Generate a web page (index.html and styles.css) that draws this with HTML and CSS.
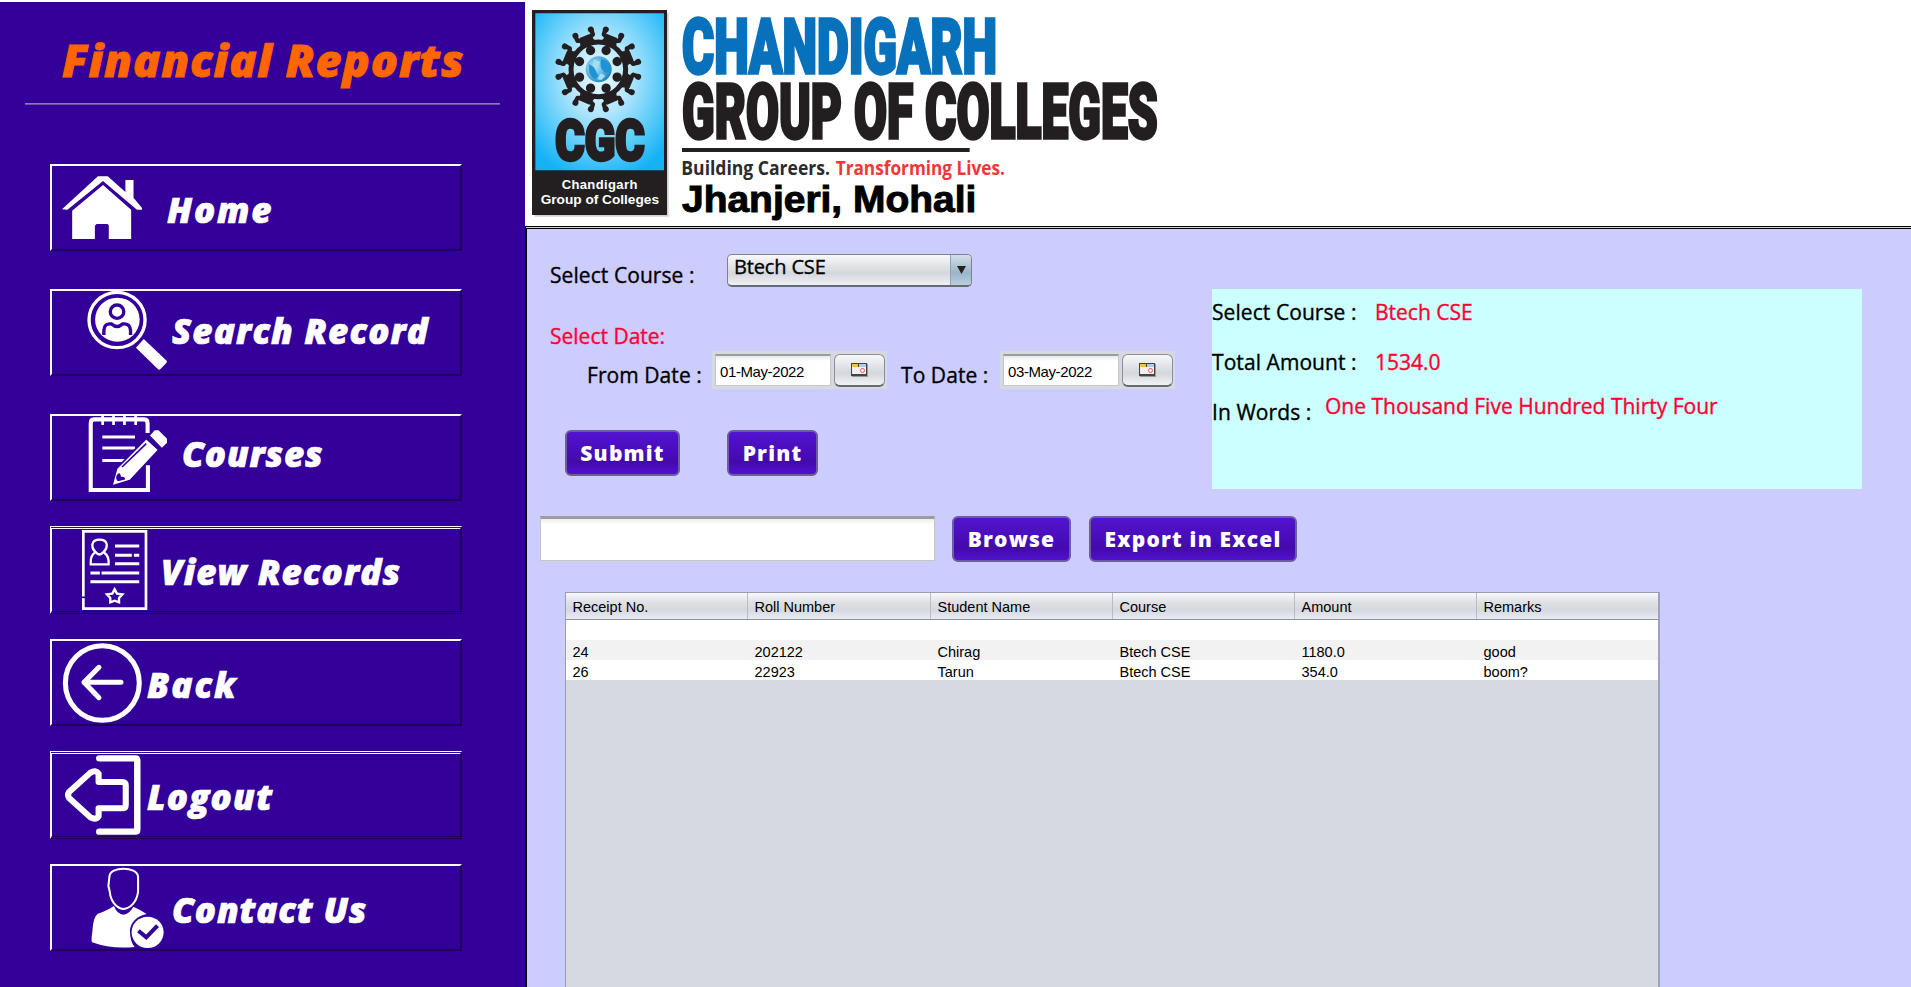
FILE: index.html
```html
<!DOCTYPE html>
<html lang="en">
<head>
<meta charset="utf-8">
<title>Financial Reports</title>
<link rel="stylesheet" href="styles.css">
</head>
<body>
<div class="app">
  <aside class="sidebar">
    <h1 class="title">Financial Reports</h1>
    <hr class="rule">
    <nav class="menu">
      <a class="item home">
        <svg width="80" height="63" viewBox="184 528 236 189" preserveAspectRatio="none" fill="#fff"><path d="M184 628L290 529H319L371 576V540H395V593L420 624V629H405L305 543L200 629Z"/><path d="M214 632L305 555L388 629V717H322V676L318 672H286L281 677V717H214Z"/></svg>
        <span class="label">Home</span>
      </a>
      <a class="item search">
        <svg width="80" height="79" viewBox="257 90 237 237" preserveAspectRatio="none"><circle cx="346" cy="177" r="83" fill="none" stroke="#fff" stroke-width="10"/><circle cx="347" cy="176" r="66" fill="#fff"/><circle cx="346" cy="152" r="20" fill="#fff" stroke="#309" stroke-width="10"/><path d="M307 226V208Q308 186 330 189Q346 204 362 189Q385 186 386 208V226Q346 250 307 226Z" fill="#fff"/><path d="M307 222V208Q308 186 330 189Q346 204 362 189Q385 186 386 208V222" fill="none" stroke="#309" stroke-width="10"/><path d="M425 234L493 299Q495 303 492 306L474 325Q470 328 466 323L402 260Z" fill="#fff"/></svg>
        <span class="label">Search Record</span>
      </a>
      <a class="item courses">
        <svg width="79" height="75" viewBox="259 466 232 222" preserveAspectRatio="none" fill="none" stroke="#fff"><path d="M434 516V488Q434 476 424 476H277Q267 476 267 488V685H435V612" stroke-width="12"/><path d="M302 466V493M334 466V493M366 466V493M399 466V493" stroke-width="8"/><path d="M301 528H397M301 561H397M301 598H375" stroke-width="9"/><path d="M430 532L467 566L384 656L329 673L343 621Z" fill="#fff" stroke="#309" stroke-width="5"/><path d="M359 617L430 548" stroke="#309" stroke-width="5"/><path d="M344 640Q353 628 356 646Q369 645 368 654L347 659Q338 652 344 640Z" fill="#309" stroke="none"/><path d="M455 508H466L491 533V545L476 560L441 524Z" fill="#fff" stroke="none"/></svg>
        <span class="label">Courses</span>
      </a>
      <a class="item view double">
        <svg width="66" height="80" viewBox="243 90 196 240" preserveAspectRatio="none" fill="none" stroke="#fff"><path d="M247 94H433V326H247Z" stroke-width="8"/><path d="M243 292H252" stroke="#309" stroke-width="5"/><path d="M284 157C268 142 270 119 295 119C321 119 322 142 306 157Q295 170 284 157ZM281 158Q267 168 269 193H322Q324 168 309 158" stroke-width="7"/><path d="M341 138H413M341 166H391M397 166H413M341 191H413M268 219H296M301 219H413M268 245H413" stroke-width="9"/><path d="M340 268L347 281L363 283L353 294V307L340 302L327 307V294L317 283L333 281Z" stroke-width="7"/></svg>
        <span class="label">View Records</span>
      </a>
      <a class="item back">
        <svg width="80" height="80" viewBox="184 429 236 240" preserveAspectRatio="none" fill="none" stroke="#fff"><ellipse cx="303" cy="549" rx="109" ry="112" stroke-width="15"/><path d="M293 502L249 547L293 593M249 547H358" stroke-width="15" stroke-linecap="round" stroke-linejoin="round"/></svg>
        <span class="label">Back</span>
      </a>
      <a class="item logout double">
        <svg width="75" height="80" viewBox="192 45 221 240" preserveAspectRatio="none" fill="none" stroke="#fff" stroke-linecap="round" stroke-linejoin="round"><path d="M293 55H399Q405 55 405 61V269Q405 275 399 275H293" stroke-width="19"/><path d="M291 126V101Q283 88 267 98L204 156Q198 165 204 174L267 232Q283 241 291 229V205H361Q371 205 371 194V137Q371 126 361 126Z" stroke-width="18"/></svg>
        <span class="label">Logout</span>
      </a>
      <a class="item contact">
        <svg width="73" height="80" viewBox="270 384 214 240" preserveAspectRatio="none"><path d="M324 410C325 378 405 378 408 410V455C405 485 385 505 365 507C343 504 327 482 325 455L321 438Z" fill="none" stroke="#fff" stroke-width="6"/><path d="M337 498Q347 523 365 524Q383 522 394 500Q417 510 433 522Q390 532 384 570Q384 605 398 621Q330 628 273 607Q270 600 274 575Q276 530 290 521Q320 511 337 498Z" fill="#fff"/><circle cx="436" cy="577" r="47" fill="#fff"/><path d="M409 572L432 592L465 557" fill="none" stroke="#309" stroke-width="12"/></svg>
        <span class="label">Contact Us</span>
      </a>
    </nav>
  </aside>

  <main class="main">
    <header class="banner">
      <svg class="logo" width="642" height="211" viewBox="36 30 1926 633">
        <defs>
          <radialGradient id="sky" cx=".5" cy=".4" r=".68"><stop offset="0" stop-color="#eefaff"/><stop offset=".35" stop-color="#b4e6fd"/><stop offset=".7" stop-color="#5cccf9"/><stop offset="1" stop-color="#15b2f6"/></radialGradient>
          <radialGradient id="globe" cx=".35" cy=".4" r=".7"><stop offset="0" stop-color="#b9e4f8"/><stop offset=".5" stop-color="#62b8e6"/><stop offset="1" stop-color="#167fc0"/></radialGradient>
          <g id="man"><circle cx="0" cy="-61" r="14"/><path d="M-14-82L-12-98L-25-103L-26-117M14-82L12-98L25-103L26-117" fill="none" stroke="#231f20" stroke-width="13" stroke-linejoin="round"/><path d="M-24-82L0-72L24-82L16-108H-16Z"/><circle cx="-25" cy="-119" r="9"/><circle cx="25" cy="-119" r="9"/></g>
        </defs>
        <path d="M44 38H446V650H44Z" fill="#d2d2d2"/>
        <path d="M36 30H441V645H36Z" fill="#231f20"/>
        <path d="M46 40H432V511H46Z" fill="url(#sky)"/>
        <g fill="#231f20" transform="translate(235 208)">
          <circle r="82" fill="none" stroke="#231f20" stroke-width="15"/>
          <use href="#man" transform="rotate(22.5)"/><use href="#man" transform="rotate(67.5)"/><use href="#man" transform="rotate(112.5)"/><use href="#man" transform="rotate(157.5)"/><use href="#man" transform="rotate(202.5)"/><use href="#man" transform="rotate(247.5)"/><use href="#man" transform="rotate(292.5)"/><use href="#man" transform="rotate(337.5)"/>
        </g>
        <circle cx="236" cy="208" r="39" fill="url(#globe)"/>
        <path d="M243 177Q265 180 272 205Q260 228 250 212Q238 205 243 177ZM208 192L222 202L235 228L225 238Q202 225 208 192Z" fill="#1e92d2"/>
        <path d="M222 178L240 186L232 205L219 198ZM242 220L256 227L244 240L232 238Z" fill="#a5dcf5"/>
        <g font-family="Roboto, sans-serif" font-weight="900" stroke-linejoin="miter">
          <text x="106" y="481" font-size="168" textLength="268" lengthAdjust="spacingAndGlyphs" fill="#231f20" stroke="#231f20" stroke-width="10">CGC</text>
          <text x="486" y="220" font-size="226" textLength="945" lengthAdjust="spacingAndGlyphs" fill="#0871bb" stroke="#0871bb" stroke-width="10">CHANDIGARH</text>
          <text x="486" y="415" font-size="226" textLength="1427" lengthAdjust="spacingAndGlyphs" fill="#231f20" stroke="#231f20" stroke-width="10">GROUP OF COLLEGES</text>
        </g>
        <g font-family="Liberation Sans, sans-serif" font-weight="700">
          <text x="125" y="567" font-size="39" textLength="227" fill="#fff">Chandigarh</text>
          <text x="62" y="612" font-size="39" textLength="355" lengthAdjust="spacingAndGlyphs" fill="#fff">Group of Colleges</text>
          <text x="486" y="635" font-size="112" textLength="883" lengthAdjust="spacingAndGlyphs" stroke="#000" stroke-width="3">Jhanjeri, Mohali</text>
        </g>
        <path d="M486 444H1349V456H486Z" fill="#231f20"/>
        <g font-family="Open Sans, sans-serif" font-weight="700" font-size="56">
          <text x="484" y="524" textLength="446" lengthAdjust="spacingAndGlyphs" fill="#2b2b2d">Building Careers.</text>
          <text x="947" y="524" textLength="508" lengthAdjust="spacingAndGlyphs" fill="#ee3737">Transforming Lives.</text>
        </g>
      </svg>
    </header>

    <section class="panel">
      <div class="top">
        <div class="filters">
          <div class="row course-row">
            <label class="text">Select Course :</label>
            <div class="combo"><span class="text">Btech CSE</span><span class="drop"><svg width="9" height="8" viewBox="0 0 9 8"><path d="M0 0H9L4.5 8Z" fill="#222"/></svg></span></div>
          </div>
          <div class="text red date-head">Select Date:</div>
          <div class="row date-row">
            <label class="text t-from">From Date :</label>
            <div class="chooser"><span class="date"><span>01-May-2022</span></span><span class="pick"><svg width="17" height="14" viewBox="0 0 17 14"><path d="M1 1H17V14H1Z" fill="#999"/><path d="M0 0H16V13H0Z" fill="#444"/><path d="M1 1H7V4H1Z" fill="#fb4"/><path d="M8 1H15V4H8Z" fill="#aaccf0"/><path d="M1 4H15V11H1Z" fill="#f4eeee"/><circle cx="11.500" cy="7.500" r="2" fill="#fff" stroke="#e55"/></svg></span></div>
            <label class="text t-to">To Date :</label>
            <div class="chooser"><span class="date"><span>03-May-2022</span></span><span class="pick"><svg width="17" height="14" viewBox="0 0 17 14"><path d="M1 1H17V14H1Z" fill="#999"/><path d="M0 0H16V13H0Z" fill="#444"/><path d="M1 1H7V4H1Z" fill="#fb4"/><path d="M8 1H15V4H8Z" fill="#aaccf0"/><path d="M1 4H15V11H1Z" fill="#f4eeee"/><circle cx="11.500" cy="7.500" r="2" fill="#fff" stroke="#e55"/></svg></span></div>
          </div>
          <div class="row action-row">
            <button class="btn submit">Submit</button>
            <button class="btn print">Print</button>
          </div>
        </div>
        <div class="summary">
          <div class="line"><span class="text">Select Course :</span><span class="text red">Btech CSE</span></div>
          <div class="line"><span class="text">Total Amount :</span><span class="text red">1534.0</span></div>
          <div class="line words"><span class="text">In Words :</span><span class="text red">One Thousand Five Hundred Thirty Four</span></div>
        </div>
      </div>
      <div class="export-row">
        <input class="path" type="text">
        <button class="btn browse">Browse</button>
        <button class="btn excel">Export in Excel</button>
      </div>
      <div class="grid">
        <div class="tr head"><span>Receipt No.</span><span>Roll Number</span><span>Student Name</span><span>Course</span><span>Amount</span><span>Remarks</span></div>
        <div class="tr"></div>
        <div class="tr alt"><span>24</span><span>202122</span><span>Chirag</span><span>Btech CSE</span><span>1180.0</span><span>good</span></div>
        <div class="tr"><span>26</span><span>22923</span><span>Tarun</span><span>Btech CSE</span><span>354.0</span><span>boom?</span></div>
      </div>
    </section>
  </main>
</div>
</body>
</html>
```
FILE: styles.css
```css
* { box-sizing: border-box; }
body { margin: 0; background: #fff; overflow: hidden; font-family: "Liberation Sans", Arial, sans-serif; }
svg { display: block; flex: none; overflow: visible; }
.app { display: flex; width: 1911px; height: 987px; }

.sidebar { width: 525px; height: 985px; margin-top: 2px; background: #309; flex: none; }
.title { margin: 0; padding: 35px 0 0 62px; height: 101px; font: italic 800 45px/46px "Open Sans", sans-serif; letter-spacing: .9px; color: #f60; white-space: nowrap; -webkit-text-stroke: .8px #f60; }
.rule { width: 475px; height: 2px; margin: 0 0 0 25px; border: 0; background: linear-gradient(#8a7abc 50%, #69569c 50%); }
.menu { padding: 59px 0 0 50px; }
.item { display: flex; align-items: flex-start; width: 412px; height: 87px; border: 2px solid; border-color: #fff #1e0059 #1e0059 #fff; color: #fff; }
.item.double { height: 88px; border-top: 3px double #fff; border-bottom: 3px double #1e0059; }
.label { font: italic 800 35px/36px "Open Sans", sans-serif; letter-spacing: 1.1px; white-space: nowrap; margin-top: 26px; -webkit-text-stroke: .7px #fff; }
.search, .courses { margin-top: 38px; }
.view, .back, .logout, .contact { margin-top: 25px; }
.home svg { margin: 10px 0 0 10px; }
.home .label { margin-left: 25px; letter-spacing: 1.9px; }
.search svg { margin: 0 0 0 35px; }
.search .label { margin: 22px 0 0 5px; }
.courses svg { margin: 0 0 0 36px; }
.courses .label { margin: 20px 0 0 15px; letter-spacing: .8px; }
.view svg { margin: 1px 0 0 30px; }
.view .label { margin: 25px 0 0 13px; }
.back svg { margin: 2px 0 0 10px; }
.back .label { margin-left: 5px; letter-spacing: 2px; }
.logout svg { margin: 1px 0 0 13px; }
.logout .label { margin: 25px 0 0 7px; letter-spacing: 1.3px; }
.contact svg { margin: 2px 0 0 39px; }
.contact .label { margin-left: 8px; letter-spacing: .8px; }

.main { flex: 1; display: flex; flex-direction: column; min-width: 0; }
.banner { height: 226px; padding: 10px 0 0 7px; flex: none; background: #fff; }
.panel { flex: 1; min-height: 0; border-top: 3px double #000; border-left: 2px solid #000; background: #ccf; }
.text { font: 500 21px/28px "Open Sans", sans-serif; color: #000; white-space: nowrap; -webkit-text-stroke: .35px currentColor; letter-spacing: .07px; }
.text.red { color: #f03; letter-spacing: 0; }
.top { display: flex; height: 287px; }
.filters { width: 685px; padding: 25px 0 0 23px; flex: none; }
.row { display: flex; }
.course-row { height: 68px; }
.course-row label { width: 177px; padding-top: 7px; }
.combo { display: flex; justify-content: space-between; width: 245px; height: 33px; border: 1px solid #7e838b; border-bottom: 2px solid #666a72; border-radius: 5px; background: linear-gradient(#f7f8fa, #d4d7dc 60%, #eef0f3); overflow: hidden; padding-left: 6px; }
.combo .text { font-size: 20px; line-height: 24px; letter-spacing: -.15px; }
.drop { width: 21px; display: flex; align-items: center; justify-content: center; border-left: 1px solid #8da4b8; background: linear-gradient(#d3dfe8, #9cb4c8 60%, #b9d0e0); }
.date-head { height: 29px; }
.date-row { height: 79px; padding-left: 37px; }
.date-row label { padding-top: 10px; }
.t-from { width: 125px; }
.chooser { display: flex; width: 175px; height: 38px; padding: 3px 2px 3px 3px; background: #d6d9df; justify-content: space-between; }
.date { width: 116px; height: 32px; padding: 6px 0 0 4px; border: 1px solid #c5c8cc; border-top: 2px solid #9b9da1; background: linear-gradient(#e8e8e8, #fff 5px); font-size: 15px; letter-spacing: -.4px; line-height: 20px; white-space: nowrap; }
.pick { width: 51px; height: 33px; display: flex; align-items: center; justify-content: center; border: 1px solid #8b8f97; border-bottom: 2px solid #666a72; border-radius: 6px; background: linear-gradient(#f7f8fa, #d4d7dc 60%, #f0f2f5); }
.date-row .t-to { width: 113px; padding-left: 14px; }
.action-row { padding: 0 0 0 15px; }
.btn { height: 46px; padding: 0; border: 2px solid #6a5ea0; border-radius: 6px; background: linear-gradient(#5214d0, #4a0dbb 45%, #4409ac 70%, #5214d6) border-box; color: #fff; font: 800 21px/40px "Open Sans", sans-serif; letter-spacing: 1.2px; text-align: center; white-space: nowrap; }
.submit { width: 115px; }
.print { width: 91px; margin-left: 47px; }
.summary { width: 650px; height: 200px; margin-top: 60px; background: #cff; padding-top: 9px; }
.line { display: flex; height: 50px; }
.line .text:first-child { width: 163px; }
.line.words .text:first-child { width: 113px; }
.words .red { margin-top: -6px; }
.export-row { display: flex; height: 76px; padding-left: 13px; }
.path { width: 395px; height: 45px; border: 1px solid #c4c6c0; border-top: 3px solid #9b9da1; background: linear-gradient(#ececec, #fff 5px); }
.browse { width: 119px; margin-left: 17px; }
.excel { width: 208px; margin-left: 18px; }
.grid { width: 1095px; height: 400px; margin-left: 38px; border: 1px solid #9a9bb5; border-right: 2px solid #a0a0c4; background: #d6d9df; }
.tr { display: grid; grid-template-columns: 182px 183px 182px 182px 182px 1fr; height: 20px; background: #fff; font-size: 14.5px; line-height: 24px; overflow: hidden; }
.tr span { padding-left: 6.500px; white-space: nowrap; }
.tr.alt { background: #f2f2f2; }
.tr.head { height: 27px; line-height: 28px; border-bottom: 1px solid #8d9096; background: linear-gradient(#f7f8fa, #dfe1e5 35%, #d5d8de 65%, #e9ecf2); }
.head span { border-right: 1px solid #b9bcc2; }
.head span:last-child { border: 0; }
```
